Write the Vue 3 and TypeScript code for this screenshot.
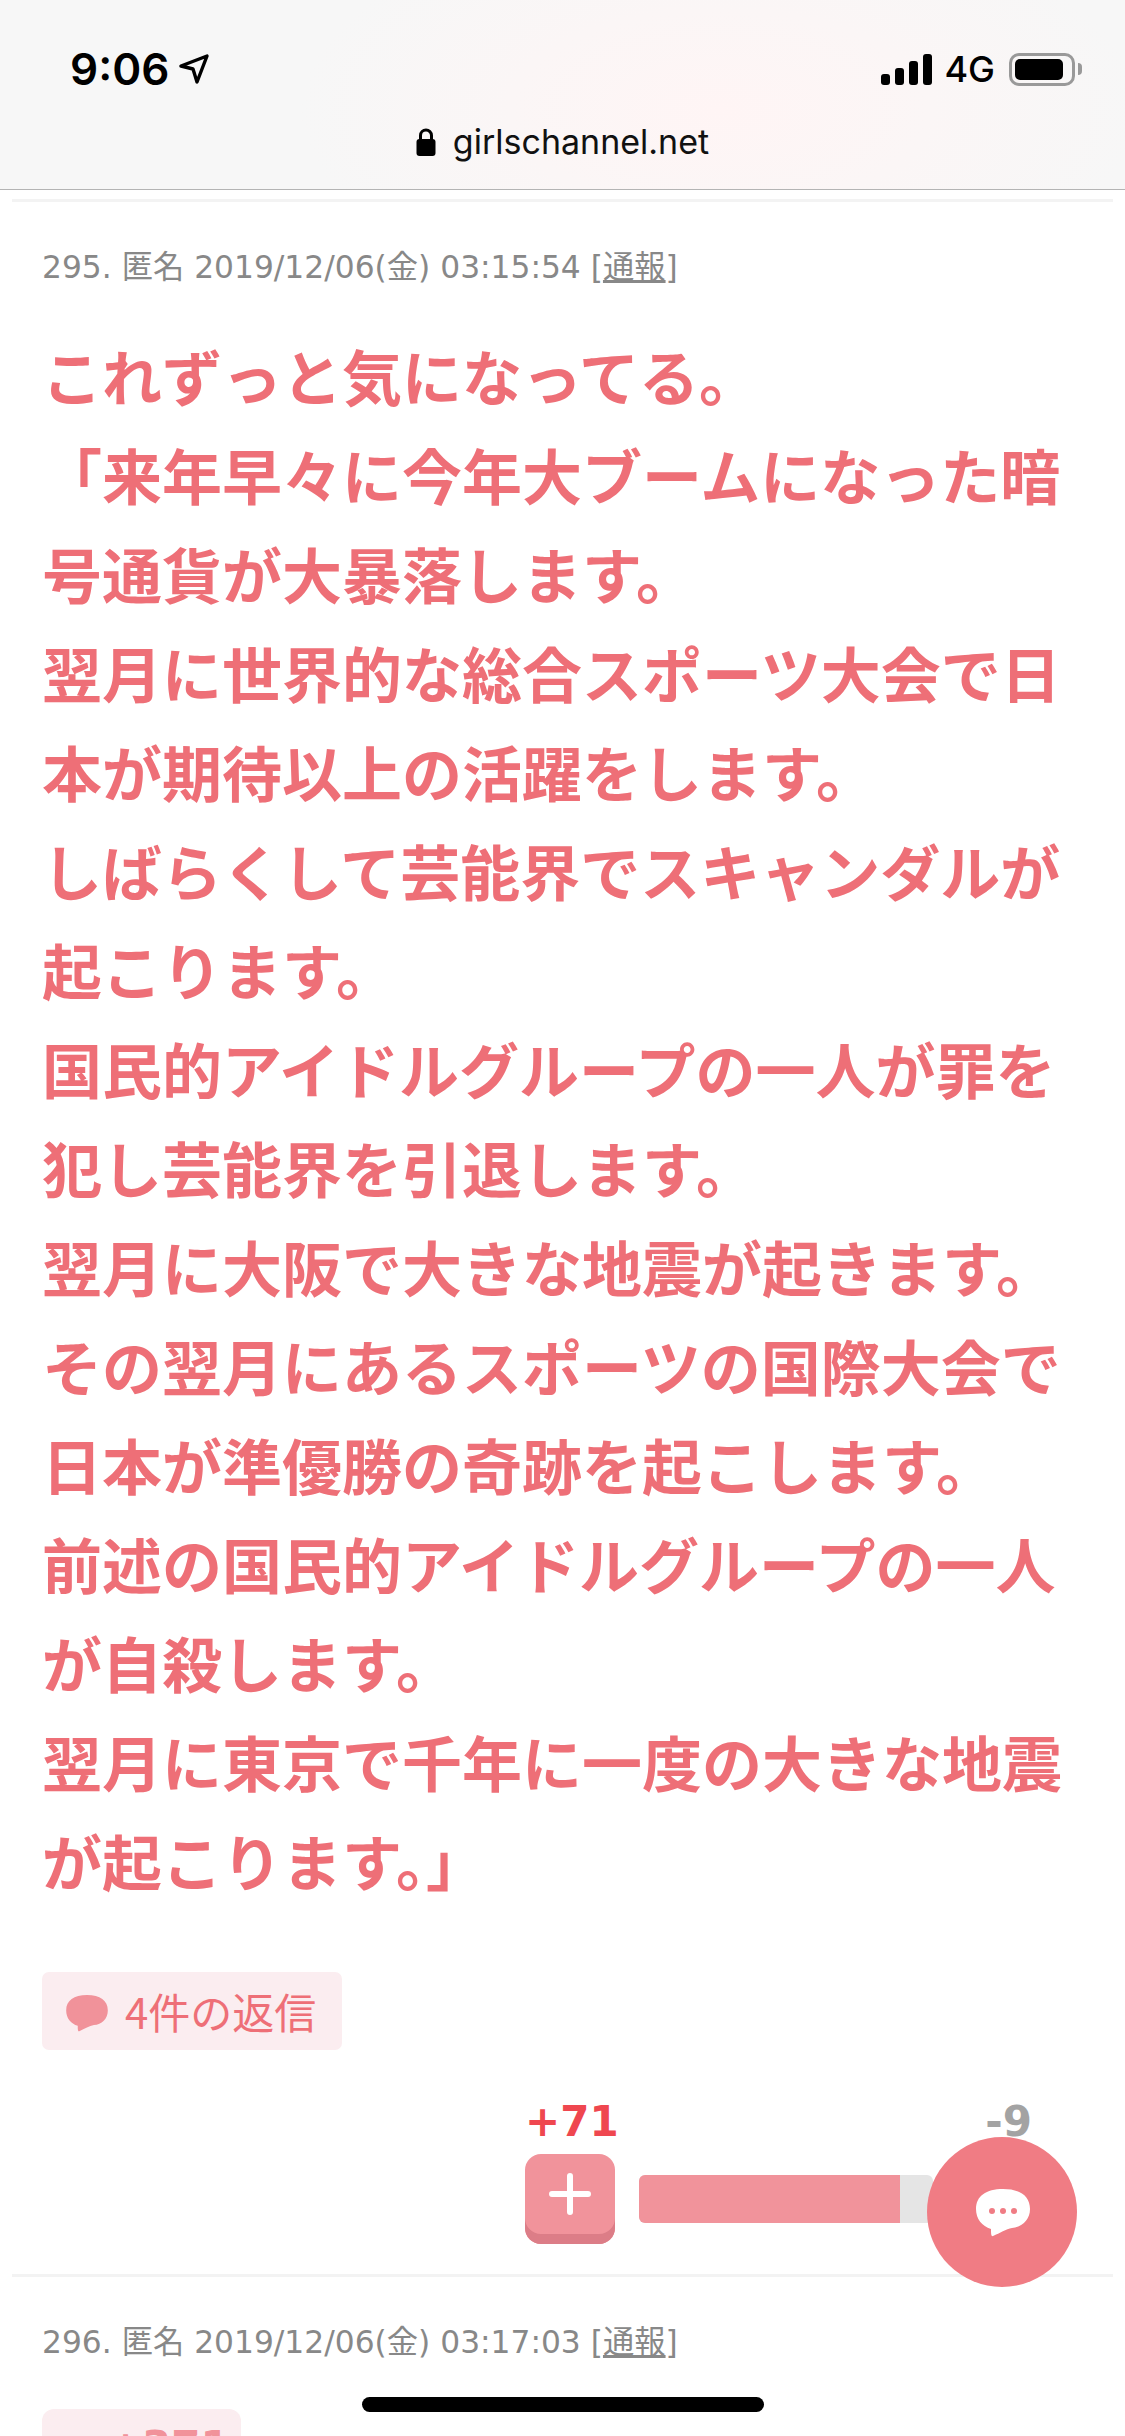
<script setup lang="ts">
const bodyLines: string[] = [
  'これずっと気になってる。',
  '「来年早々に今年大ブームになった暗',
  '号通貨が大暴落します。',
  '翌月に世界的な総合スポーツ大会で日',
  '本が期待以上の活躍をします。',
  'しばらくして芸能界でスキャンダルが',
  '起こります。',
  '国民的アイドルグループの一人が罪を',
  '犯し芸能界を引退します。',
  '翌月に大阪で大きな地震が起きます。',
  'その翌月にあるスポーツの国際大会で',
  '日本が準優勝の奇跡を起こします。',
  '前述の国民的アイドルグループの一人',
  'が自殺します。',
  '翌月に東京で千年に一度の大きな地震',
  'が起こります。」',
]

const bubblePath =
  'M27 0C44 0 54 7 54 20C54 31 46 38 36 39C30 40 24 44 17 47C15 48 15 44 15 40C6 37 0 30 0 20C0 7 10 0 27 0Z'

// plus votes share of the bar
const plusVotes = 71
const minusVotes = 9
const plusShare = `${(plusVotes / (plusVotes + minusVotes)) * 100}%`
</script>

<template>
  <div class="screen">
    <header class="browser-bar">
      <div class="status-row">
        <div class="status-left">
          <span class="clock">9:06</span>
          <svg class="location" width="30" height="30" viewBox="0 0 30 30">
            <path d="M2 12L28 2L18 28L14 15Z" fill="none" stroke="#000" stroke-width="3.4" stroke-linejoin="round" />
          </svg>
        </div>
        <div class="status-right">
          <div class="signal">
            <i class="sig sig-1"></i>
            <i class="sig sig-2"></i>
            <i class="sig sig-3"></i>
            <i class="sig sig-4"></i>
          </div>
          <span class="network">4G</span>
          <div class="battery"><div class="battery-level"></div></div>
          <div class="battery-nub"></div>
        </div>
      </div>
      <div class="url-row">
        <svg class="lock" width="20" height="28" viewBox="0 0 20 28">
          <path d="M4.5 12V7.5a5.5 5.5 0 0 1 11 0V12" fill="none" stroke="#000" stroke-width="3" />
          <rect x="0.5" y="11" width="19" height="17" rx="3" fill="#000" />
        </svg>
        <span class="url">girlschannel.net</span>
      </div>
    </header>

    <section class="post">
      <div class="meta">295. 匿名 2019/12/06(金) 03:15:54 [<u>通報</u>]</div>
      <div class="body-text">
        <div v-for="line in bodyLines" :key="line" class="body-line">{{ line }}</div>
      </div>
      <div class="reply-tag">
        <svg class="reply-icon" width="42" height="37" viewBox="0 0 54 48">
          <path :d="bubblePath" fill="#f1929a" />
        </svg>
        <span>4件の返信</span>
      </div>
      <div class="vote">
        <div class="vote-counts">
          <span class="plus-count">+71</span>
          <span class="minus-count">-9</span>
        </div>
        <div class="vote-controls">
          <button class="plus-btn" type="button" aria-label="plus">
            <svg width="42" height="42" viewBox="0 0 42 42">
              <path d="M21 3V39M3 21H39" stroke="#fff" stroke-width="6" stroke-linecap="round" />
            </svg>
          </button>
          <div class="vote-bar">
            <div class="vote-bar-fill" :style="{ width: plusShare }"></div>
          </div>
        </div>
      </div>
    </section>

    <section class="post">
      <div class="meta">296. 匿名 2019/12/06(金) 03:17:03 [<u>通報</u>]</div>
      <div class="next-tag">
        <span class="next-mark">+</span>
        <span class="next-count">371</span>
      </div>
    </section>

    <button class="fab" type="button" aria-label="comment">
      <svg width="54" height="48" viewBox="0 0 54 48">
        <path :d="bubblePath" fill="#fff" />
        <circle cx="16" cy="22" r="3" fill="#f07c84" />
        <circle cx="27" cy="22" r="3" fill="#f07c84" />
        <circle cx="38" cy="22" r="3" fill="#f07c84" />
      </svg>
    </button>
    <div class="home-indicator"></div>
  </div>
</template>

<style scoped>
.screen {
  position: relative;
  width: 1125px;
  height: 2436px;
  overflow: hidden;
  background: #fff;
  font-family: "DejaVu Sans", "Noto Sans CJK JP", sans-serif;
}

.browser-bar {
  height: 189px;
  box-sizing: content-box;
  border-bottom: 1px solid #b4b4b4;
  background: radial-gradient(ellipse 420px 200px at 720px 110px, #fff5f5, #f7f7f7);
}

.status-row {
  display: flex;
  justify-content: space-between;
  align-items: center;
  height: 68px;
  padding: 35px 43px 0 70px;
}

.status-left {
  display: flex;
  align-items: center;
  gap: 10px;
}

.clock {
  font-family: Inter, sans-serif;
  font-size: 44px;
  font-weight: 600;
  line-height: 50px;
  color: #000;
}

.location {
  display: block;
}

.status-right {
  display: flex;
  align-items: center;
}

.signal {
  display: flex;
  align-items: flex-end;
  gap: 5px;
  height: 32px;
  margin-right: 12px;
}

.sig {
  display: block;
  width: 9px;
  background: #000;
  border-radius: 3px;
}

.sig-1 { height: 11px; }
.sig-2 { height: 17px; }
.sig-3 { height: 24px; }
.sig-4 { height: 31px; }

.network {
  font-family: Inter, sans-serif;
  font-size: 36px;
  font-weight: 500;
  line-height: 40px;
  color: #000;
  margin-right: 14px;
}

.battery {
  box-sizing: border-box;
  width: 66px;
  height: 33px;
  padding: 3px;
  border: 3px solid #999;
  border-radius: 10px;
}

.battery-level {
  width: 48px;
  height: 21px;
  background: #000;
  border-radius: 5px;
}

.battery-nub {
  width: 4px;
  height: 12px;
  margin-left: 3px;
  background: #999;
  border-radius: 0 4px 4px 0;
}

.url-row {
  display: flex;
  justify-content: center;
  align-items: center;
  gap: 17px;
  height: 44px;
  margin-top: 17px;
}

.lock {
  display: block;
}

.url {
  font-family: Inter, sans-serif;
  font-size: 34px;
  line-height: 44px;
  color: #111;
}

.post {
  margin: 9px 12px 0;
  padding: 45px 30px 30px;
  border-top: 3px solid #f3f3f3;
}

.post + .post {
  margin-top: 0;
}

.meta {
  font-size: 31.3px;
  line-height: 40px;
  color: #888;
  white-space: nowrap;
}

.body-text {
  margin-top: 38px;
  font-family: "Noto Sans CJK JP", sans-serif;
  font-size: 60px;
  font-weight: 700;
  line-height: 99px;
  color: #ee6f77;
  white-space: nowrap;
}

.reply-tag {
  display: inline-flex;
  align-items: center;
  gap: 17px;
  box-sizing: border-box;
  width: 300px;
  height: 78px;
  margin-top: 63px;
  padding-left: 24px;
  background: #fbedf0;
  border-radius: 7px;
  font-family: "Noto Sans CJK JP", sans-serif;
  font-size: 42px;
  line-height: 78px;
  color: #ee6f77;
}

.reply-icon {
  display: block;
  margin-top: 4px;
}

.vote {
  width: 507px;
  margin: 46px 0 0 483px;
}

.vote-counts {
  display: flex;
  justify-content: space-between;
  height: 48px;
  font-size: 42px;
  font-weight: 700;
  line-height: 52px;
}

.plus-count {
  color: #ef474f;
}

.minus-count {
  color: #a3a3a3;
}

.vote-controls {
  display: flex;
  align-items: flex-start;
  gap: 24px;
  margin-top: 10px;
}

.plus-btn {
  display: flex;
  justify-content: center;
  align-items: center;
  flex: none;
  width: 90px;
  height: 90px;
  padding: 0 0 10px;
  border: none;
  border-radius: 16px;
  background: #f1939b;
  box-shadow: inset 0 -10px 0 #dc7d87;
}

.plus-btn svg {
  display: block;
}

.vote-bar {
  flex: none;
  width: 294px;
  height: 48px;
  margin-top: 21px;
  background: #e5e5e5;
  border-radius: 6px;
  overflow: hidden;
}

.vote-bar-fill {
  height: 100%;
  background: #f1939b;
}

.next-tag {
  display: flex;
  align-items: flex-start;
  gap: 34px;
  box-sizing: border-box;
  width: 199px;
  height: 78px;
  margin-top: 47px;
  padding-left: 66px;
  background: #fbedf0;
  border-radius: 12px;
  font-size: 42px;
  font-weight: 700;
  line-height: 76px;
  color: #f1929a;
}

.next-mark {
  width: 0;
}

.fab {
  position: absolute;
  left: 927px;
  top: 2137px;
  display: flex;
  justify-content: center;
  align-items: center;
  width: 150px;
  height: 150px;
  padding: 0;
  border: none;
  border-radius: 50%;
  background: #f07c84;
}

.fab svg {
  display: block;
  margin-left: 2px;
  margin-top: 2px;
}

.home-indicator {
  position: absolute;
  left: 362px;
  top: 2397px;
  width: 402px;
  height: 15px;
  background: #000;
  border-radius: 8px;
}
</style>

<style>
html,
body {
  margin: 0;
  background: #fff;
}
</style>
